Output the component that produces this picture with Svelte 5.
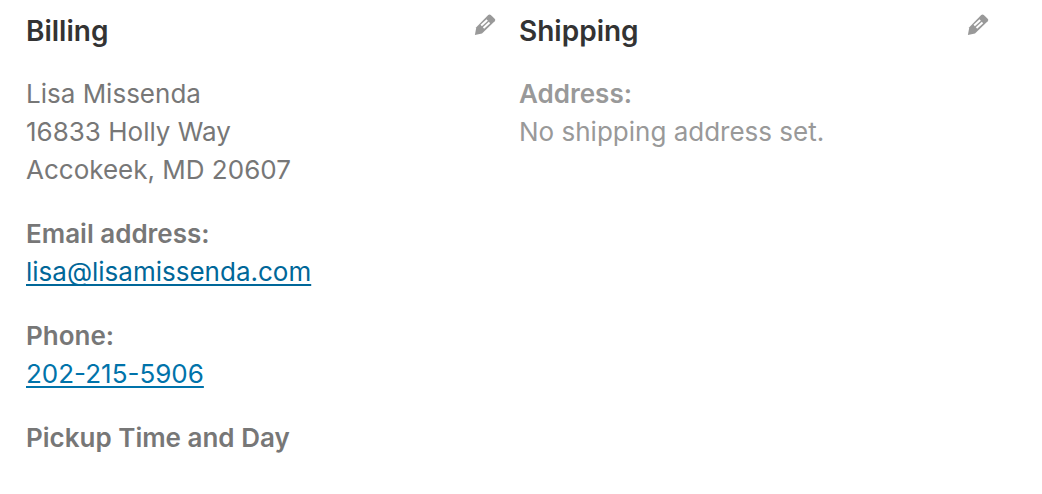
<script lang="ts">
	const billing = {
		lines: ['Lisa Missenda', '16833 Holly Way', 'Accokeek, MD 20607'],
		email: 'lisa@lisamissenda.com',
		phone: '202-215-5906'
	};
</script>

{#snippet editButton(label: string)}
	<button class="edit" type="button" aria-label={label}>
		<svg viewBox="0 0 24 24" width="24" height="24" aria-hidden="true">
			<path
				class="body"
				d="M15.2 3.1Q16.5 2 17.8 3L21.9 7Q22.8 8 21.7 9.2L9 21.6 1.9 23 3.3 15.2Z"
			/>
			<path class="slit" d="M8.2 13.5 14.2 8.1M10.5 16 16.5 10.6" />
		</svg>
	</button>
{/snippet}

<div class="addresses">
	<section class="column">
		<header>
			<h3>Billing</h3>
			{@render editButton('Edit billing')}
		</header>
		<p>
			{#each billing.lines as line}
				<span class="line">{line}</span>
			{/each}
		</p>
		<p>
			<strong>Email address:</strong>
			<a href="mailto:{billing.email}">{billing.email}</a>
		</p>
		<p>
			<strong>Phone:</strong>
			<a class="phone" href="tel:{billing.phone}">{billing.phone}</a>
		</p>
		<p><strong>Pickup Time and Day</strong></p>
	</section>

	<section class="column">
		<header>
			<h3>Shipping</h3>
			{@render editButton('Edit shipping')}
		</header>
		<p class="none">
			<strong>Address:</strong>
			<span class="line">No shipping address set.</span>
		</p>
	</section>
</div>

<style>
	:global(body) {
		margin: 0;
		background: #fff;
	}
	.addresses {
		display: grid;
		grid-template-columns: 1fr 1fr;
		gap: 22px;
		padding: 12px 52px 24px 26px;
		color: #777;
		font: 26px/38px Inter, sans-serif;
	}
	header {
		display: flex;
		align-items: flex-start;
		justify-content: space-between;
		margin-bottom: 25px;
	}
	h3 {
		margin: 0;
		color: #333;
		font-size: 28px;
		font-weight: 600;
		line-height: 38px;
	}
	p {
		margin: 0 0 26px;
	}
	strong,
	.line {
		display: block;
	}
	strong {
		font-weight: 600;
	}
	a {
		color: #006799;
		text-decoration-skip-ink: none;
		text-decoration-thickness: 2px;
		text-underline-offset: 3px;
	}
	.phone {
		color: #0073aa;
	}
	.none {
		color: #999;
	}
	.edit {
		display: flex;
		padding: 0;
		border: 0;
		background: none;
		cursor: pointer;
	}
	.body {
		fill: #999;
	}
	.slit {
		fill: none;
		stroke: #fff;
		stroke-width: 2;
	}
</style>
